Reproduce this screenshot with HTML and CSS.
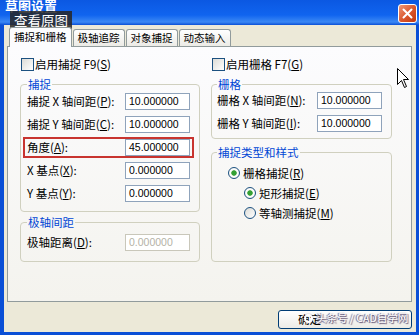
FILE: index.html
```html
<!DOCTYPE html>
<html lang="zh">
<head>
    <meta charset="UTF-8">
    <title>草图设置</title>
    <link rel="stylesheet" href="styles.css">
</head>
<body>
    <div class="window">
        <div class="titlebar">
            <span class="title">草图设置</span>
            <span class="close">
                <svg width="11" height="11" viewBox="0 0 11 11"><path d="M1.5 1.5 L9.5 9.5 M9.5 1.5 L1.5 9.5" stroke="#fff" stroke-width="2" stroke-linecap="round"/></svg>
            </span>
        </div>

        <div class="client">
            <div class="tabs">
                <span class="tab active">捕捉和栅格</span>
                <span class="tab">极轴追踪</span>
                <span class="tab">对象捕捉</span>
                <span class="tab">动态输入</span>
            </div>

            <div class="panel">
                <!-- colonne gauche : capture -->
                <div class="col">
                    <label class="check"><span class="box"></span>启用捕捉 F9(<u>S</u>)</label>

                    <fieldset class="group snap">
                        <legend>捕捉</legend>
                        <div class="row"><span>捕捉 X 轴间距(<u>P</u>):</span><span class="field">10.000000</span></div>
                        <div class="row"><span>捕捉 Y 轴间距(<u>C</u>):</span><span class="field">10.000000</span></div>
                        <div class="row hl"><span>角度(<u>A</u>):</span><span class="field">45.000000</span></div>
                        <div class="row"><span>X 基点(<u>X</u>):</span><span class="field">0.000000</span></div>
                        <div class="row"><span>Y 基点(<u>Y</u>):</span><span class="field">0.000000</span></div>
                    </fieldset>

                    <fieldset class="group polar">
                        <legend>极轴间距</legend>
                        <div class="row"><span>极轴距离(<u>D</u>):</span><span class="field off">0.000000</span></div>
                    </fieldset>
                </div>

                <!-- colonne droite : grille -->
                <div class="col">
                    <label class="check"><span class="box"></span>启用栅格 F7(<u>G</u>)</label>

                    <fieldset class="group grid">
                        <legend>栅格</legend>
                        <div class="row"><span>栅格 X 轴间距(<u>N</u>):</span><span class="field">10.000000</span></div>
                        <div class="row"><span>栅格 Y 轴间距(<u>I</u>):</span><span class="field">10.000000</span></div>
                    </fieldset>

                    <fieldset class="group style">
                        <legend>捕捉类型和样式</legend>
                        <div class="radio"><span class="dot on"></span>栅格捕捉(<u>R</u>)</div>
                        <div class="radio sub"><span class="dot on"></span>矩形捕捉(<u>E</u>)</div>
                        <div class="radio sub"><span class="dot"></span>等轴测捕捉(<u>M</u>)</div>
                    </fieldset>
                </div>
            </div>

            <div class="buttons">
                <span class="btn">确定</span>
            </div>
        </div>

        <div class="overlay">查看原图</div>

        <svg class="cursor" width="13" height="21" viewBox="0 0 13 21">
            <path d="M0.5 0.5 L0.5 16.5 L4.5 12.5 L7.5 19.5 L9.5 18.5 L6.5 11.5 L11.5 11.5 Z" fill="#fff" stroke="#000" stroke-width="1"/>
        </svg>

        <div class="watermark"><span class="logo"></span>头条号 / CAD自学网</div>
    </div>
</body>
</html>
```

FILE: styles.css
```css
* { box-sizing: border-box; }
body { margin: 0; font-family: "Noto Sans CJK SC", sans-serif; font-size: 11.5px; color: #000; background: #fff; }

.window {
    position: relative;
    width: 419px;
    height: 335px;
    display: flex;
    flex-direction: column;
    overflow: hidden;
    background: #0a4fd6;
}

/* Barre de titre */
.titlebar {
    height: 25px;
    display: flex;
    align-items: flex-start;
    background: linear-gradient(180deg, #0b58e2 0%, #1064ef 60%, #3b88f4 88%, #0a4fd6 100%);
}

.title {
    color: #fff;
    font-weight: bold;
    font-size: 13px;
    line-height: 12px;
    padding: 0 0 0 5px;
}

.close {
    margin: 4px 2px 0 auto;
    width: 19px;
    height: 19px;
    border: 1px solid #fff;
    border-radius: 3px;
    background: linear-gradient(135deg, #ee9878 0%, #d9542a 55%, #c2390f 100%);
    display: flex;
    align-items: center;
    justify-content: center;
}

/* Zone client */
.client {
    flex: 1;
    margin: 0 3px 3px 4px;
    padding-top: 2px;
    background: #ece9d8;
    display: flex;
    flex-direction: column;
}

.tabs {
    height: 19px;
    display: flex;
    align-items: flex-end;
    padding-left: 5px;
    position: relative;
    z-index: 1;
}

.tab {
    height: 17px;
    margin-right: 1px;
    padding: 0 4px;
    border: 1px solid #919b9c;
    border-bottom: none;
    border-radius: 3px 3px 0 0;
    font-size: 10.5px;
    line-height: 16px;
    background: linear-gradient(#fff, #ecebe6);
}

.tab.active {
    height: 20px;
    margin-bottom: -1px;
    line-height: 18px;
    background: #fcfcfe;
}

.panel {
    flex: 1;
    margin: 0 4px 0 3px;
    padding: 11px 0 0 12px;
    border: 1px solid #919b9c;
    background: linear-gradient(#fcfcfe, #f4f3ee);
    display: grid;
    grid-template-columns: 180px 181px;
    column-gap: 11px;
    align-content: start;
}

.col {
    display: flex;
    flex-direction: column;
}

.check {
    display: flex;
    align-items: center;
    height: 13px;
    margin: 0 0 6px 1px;
    line-height: 13px;
}

.box {
    width: 13px;
    height: 13px;
    margin-right: 1px;
    border: 1px solid #1c5180;
    background: linear-gradient(135deg, #dcdcd7, #fff);
}

/* Cadres de groupe */
.group {
    margin: 0;
    min-width: 0;
    border: 1px solid #d0d0bf;
    border-radius: 4px;
}

.group legend {
    padding: 0 1px;
    font-size: 11.5px;
    line-height: 14px;
    color: #0046d5;
}

.snap { padding: 2px 9px 9px 6px; }
.polar { margin-top: 3px; padding: 5px 9px 10px 6px; }
.grid { padding: 1px 9px 6px 5px; }
.style { margin-top: 6px; padding: 7px 9px 0 5px; flex: 1; }

.row {
    display: flex;
    align-items: center;
    height: 17px;
    line-height: 15px;
}

.row + .row { margin-top: 6px; }

.row.hl {
    height: 21px;
    margin: 4px -4px -2px;
    padding: 0 2px;
    border: 2px solid #c8342f;
}

.field {
    margin-left: auto;
    width: 65px;
    height: 17px;
    padding-left: 3px;
    border: 1px solid #8fa3bb;
    background: #fff;
    font-family: "Liberation Sans", sans-serif;
    font-size: 10.5px;
    line-height: 15px;
}

.field.off { color: #b4b2a6; border-color: #c9c7ba; }

.radio {
    display: flex;
    align-items: center;
    height: 14px;
    margin-left: 11px;
}

.radio + .radio { margin-top: 6px; }
.radio.sub { margin-left: 27px; }

.dot {
    width: 12px;
    height: 12px;
    margin-right: 3px;
    border: 1px solid #1c5180;
    border-radius: 50%;
    background: linear-gradient(135deg, #dcdcd7, #fff);
}

.dot.on { background: radial-gradient(circle, #34a034 0 2.4px, #c6e4c2 2.8px, #fff 3.6px, #e6e6e0 100%); }

.buttons {
    height: 30px;
    display: flex;
    justify-content: flex-end;
    padding: 8px 4px 0 0;
}

.btn {
    width: 134px;
    height: 19px;
    padding-left: 19px;
    border: 1px solid #003c74;
    border-radius: 3px;
    background: linear-gradient(#fff, #ecebe6);
    line-height: 17px;
}

/* Éléments par-dessus */
.overlay {
    position: absolute;
    left: 10px;
    top: 11px;
    width: 62px;
    height: 18px;
    background: rgba(40, 38, 36, 0.85);
    color: #fff;
    font-size: 13.5px;
    line-height: 18px;
    text-align: center;
}

.cursor {
    position: absolute;
    left: 397px;
    top: 68px;
}

.watermark {
    position: absolute;
    left: 304px;
    top: 310px;
    display: flex;
    align-items: center;
    color: #fff;
    font-size: 10.5px;
    line-height: 16px;
    text-shadow: 1px 1px 1px #5a4a6a, -1px 0 1px #5a4a6a;
    white-space: nowrap;
}

.logo {
    width: 9px;
    height: 9px;
    margin-right: 3px;
    border-radius: 50%;
    border: 2px solid #fff;
    box-shadow: 0 0 1px #5a4a6a;
}
```
